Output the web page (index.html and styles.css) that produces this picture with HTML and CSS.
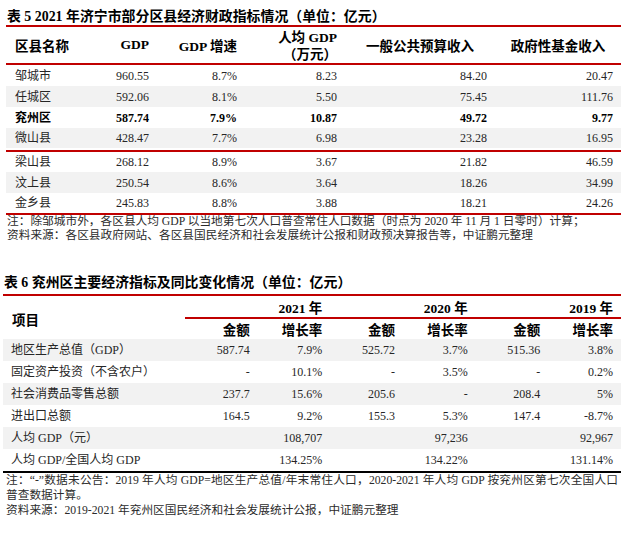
FILE: index.html
```html
<!DOCTYPE html>
<html lang="zh-CN">
<head>
<meta charset="utf-8">
<title>兖州区经济指标</title>
<link rel="stylesheet" href="styles.css">
</head>
<body>
<section class="block block-t5">
  <h2 class="cap">表 5 2021 年济宁市部分区县经济财政指标情况（单位：亿元）</h2>
  <table class="t5">
    <colgroup>
      <col class="c-name"><col class="c-gdp"><col class="c-rate"><col class="c-per"><col class="c-pub"><col class="c-fund">
    </colgroup>
    <thead>
      <tr>
        <th class="l">区县名称</th>
        <th class="r">GDP</th>
        <th class="r">GDP 增速</th>
        <th class="r two">人均 GDP<br>（万元）</th>
        <th class="c">一般公共预算收入</th>
        <th class="c">政府性基金收入</th>
      </tr>
    </thead>
    <tbody>
      <tr><td class="l">邹城市</td><td class="r">960.55</td><td class="r">8.7%</td><td class="r">8.23</td><td class="r">84.20</td><td class="r">20.47</td></tr>
      <tr class="g"><td class="l">任城区</td><td class="r">592.06</td><td class="r">8.1%</td><td class="r">5.50</td><td class="r">75.45</td><td class="r">111.76</td></tr>
      <tr class="b"><td class="l">兖州区</td><td class="r">587.74</td><td class="r">7.9%</td><td class="r">10.87</td><td class="r">49.72</td><td class="r">9.77</td></tr>
      <tr class="g gap"><td class="l">微山县</td><td class="r">428.47</td><td class="r">7.7%</td><td class="r">6.98</td><td class="r">23.28</td><td class="r">16.95</td></tr>
      <tr class="sep"><td class="l">梁山县</td><td class="r">268.12</td><td class="r">8.9%</td><td class="r">3.67</td><td class="r">21.82</td><td class="r">46.59</td></tr>
      <tr class="g"><td class="l">汶上县</td><td class="r">250.54</td><td class="r">8.6%</td><td class="r">3.64</td><td class="r">18.26</td><td class="r">34.99</td></tr>
      <tr class="last"><td class="l">金乡县</td><td class="r">245.83</td><td class="r">8.8%</td><td class="r">3.88</td><td class="r">18.21</td><td class="r">24.26</td></tr>
    </tbody>
  </table>
  <div class="notes n5">
    <span class="ln">注：除邹城市外，各区县人均 GDP 以当地第七次人口普查常住人口数据（时点为 2020 年 11 月 1 日零时）计算；</span>
    <span class="ln">资料来源：各区县政府网站、各区县国民经济和社会发展统计公报和财政预决算报告等，中证鹏元整理</span>
  </div>
</section>

<section class="block block-t6">
  <h2 class="cap">表 6 兖州区主要经济指标及同比变化情况（单位：亿元）</h2>
  <table class="t6">
    <colgroup>
      <col class="c-item"><col class="c-n"><col class="c-n"><col class="c-n"><col class="c-n"><col class="c-n"><col class="c-n">
    </colgroup>
    <thead>
      <tr class="yr">
        <th class="l item" rowspan="2">项目</th>
        <th class="r y" colspan="2">2021 年</th>
        <th class="r y" colspan="2">2020 年</th>
        <th class="r y" colspan="2">2019 年</th>
      </tr>
      <tr class="sub">
        <th class="r">金额</th><th class="r">增长率</th>
        <th class="r">金额</th><th class="r">增长率</th>
        <th class="r">金额</th><th class="r">增长率</th>
      </tr>
    </thead>
    <tbody>
      <tr class="g"><td class="l">地区生产总值（GDP）</td><td class="r">587.74</td><td class="r">7.9%</td><td class="r">525.72</td><td class="r">3.7%</td><td class="r">515.36</td><td class="r">3.8%</td></tr>
      <tr><td class="l">固定资产投资（不含农户）</td><td class="r">-</td><td class="r">10.1%</td><td class="r">-</td><td class="r">3.5%</td><td class="r">-</td><td class="r">0.2%</td></tr>
      <tr class="g"><td class="l">社会消费品零售总额</td><td class="r">237.7</td><td class="r">15.6%</td><td class="r">205.6</td><td class="r">-</td><td class="r">208.4</td><td class="r">5%</td></tr>
      <tr><td class="l">进出口总额</td><td class="r">164.5</td><td class="r">9.2%</td><td class="r">155.3</td><td class="r">5.3%</td><td class="r">147.4</td><td class="r">-8.7%</td></tr>
      <tr class="g"><td class="l">人均 GDP（元）</td><td class="r" colspan="2">108,707</td><td class="r" colspan="2">97,236</td><td class="r" colspan="2">92,967</td></tr>
      <tr class="last"><td class="l">人均 GDP/全国人均 GDP</td><td class="r" colspan="2">134.25%</td><td class="r" colspan="2">134.22%</td><td class="r" colspan="2">131.14%</td></tr>
    </tbody>
  </table>
  <div class="notes n6">
    <span class="ln just">注：“-”数据未公告：2019 年人均 GDP=地区生产总值/年末常住人口，2020-2021 年人均 GDP 按兖州区第七次全国人口</span>
    <span class="ln">普查数据计算。</span>
    <span class="ln">资料来源：2019-2021 年兖州区国民经济和社会发展统计公报，中证鹏元整理</span>
  </div>
</section>
</body>
</html>
```

FILE: styles.css
```css
html, body {
  margin: 0;
  padding: 0;
  background: #ffffff;
}
body {
  width: 628px;
  height: 535px;
  overflow: hidden;
  font-family: "Liberation Serif", "Noto Sans CJK SC", serif;
  color: #262626;
}

.block-t5 {
  padding: 8px 7px 0 6px;
}
.block-t6 {
  padding: 31px 7px 0 3px;
}

.cap {
  margin: 0;
  font-size: 13.9px;
  line-height: 17px;
  font-weight: bold;
  color: #000;
  white-space: nowrap;
}
.block-t5 .cap { padding-left: 1px; }
.block-t6 .cap { padding-left: 1px; margin-bottom: 3px; }

table {
  border-collapse: separate;
  border-spacing: 0;
  table-layout: fixed;
}
th, td {
  padding: 0 8px 0 0;
  vertical-align: middle;
  white-space: nowrap;
}
th {
  font-weight: bold;
  font-size: 13.5px;
  color: #000;
}
td {
  font-size: 12px;
}
.l { text-align: left; }
.r { text-align: right; }
.c { text-align: center; padding-right: 0; }

/* table 5 */
.t5 { width: 615px; }
.t5 .c-name { width: 94px; }
.t5 .c-gdp { width: 57px; }
.t5 .c-rate { width: 88px; }
.t5 .c-per { width: 100px; }
.t5 .c-pub { width: 150px; }
.t5 .c-fund { width: 126px; }
.t5 th {
  height: 33px;
  border-top: 2px solid #c00000;
  border-bottom: 2px solid #c00000;
}
.t5 th.two { line-height: 17px; padding-top: 2px; }
.t5 th.l, .t5 td.l { padding-left: 9px; }
.t5 td { height: 21px; line-height: 14px; }
.t5 tr.gap td { height: 20px; border-bottom: 2px solid #fff; }
.t5 tr.sep td { height: 20px; border-top: 2px solid #c00000; }
.t5 tr.last td { height: 20px; border-bottom: 2px solid #c00000; }

tr.g td { background: #f2f2f2; }
tr.b td { font-weight: bold; color: #000; }

/* table 6 */
.t6 { width: 618px; }
.t6 .c-item { width: 182px; }
.t6 .c-n { width: 72.66px; }
.t6 thead tr.yr th {
  border-top: 2px solid #c00000;
  height: 21px;
}
.t6 th.y { border-bottom: 2px solid #c00000; }
.t6 th.item { padding-left: 9px; padding-top: 2px; }
.t6 tr.sub th { height: 20px; }
.t6 td.l { padding-left: 8px; }
.t6 td { height: 22px; line-height: 14px; }
.t6 tr.last td { border-bottom: 2px solid #000; }

/* notes */
.notes {
  font-size: 11.7px;
  color: #2b2b2b;
  white-space: nowrap;
}
.notes .ln { display: block; }
.notes .ln.just {
  width: 612px;
  text-align: justify;
  text-align-last: justify;
}
.n5 { line-height: 14px; padding-left: 1px; }
.n6 { line-height: 15px; padding-left: 3px; }
```
